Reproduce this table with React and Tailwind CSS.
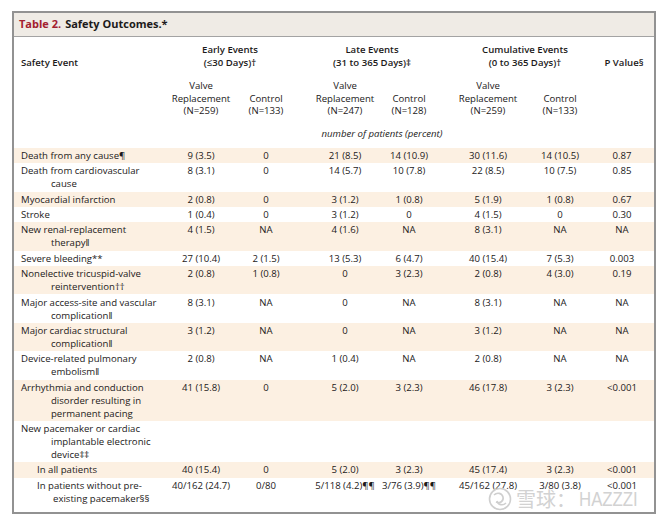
import React from "react";

const GRID = "grid grid-cols-[154px_66px_68px_78px_62px_82px_72px_58px]";
const ADJ = ["", "pr-[4px]", "pl-[8px]", "pr-[4px]", "pl-[10px]", "", "pr-[6px]"];

const rows = [
  { label: ["Death from any cause¶"], v: ["9 (3.5)", "0", "21 (8.5)", "14 (10.9)", "30 (11.6)", "14 (10.5)", "0.87"], s: true },
  { label: ["Death from cardiovascular", "cause"], v: ["8 (3.1)", "0", "14 (5.7)", "10 (7.8)", "22 (8.5)", "10 (7.5)", "0.85"] },
  { label: ["Myocardial infarction"], v: ["2 (0.8)", "0", "3 (1.2)", "1 (0.8)", "5 (1.9)", "1 (0.8)", "0.67"], s: true },
  { label: ["Stroke"], v: ["1 (0.4)", "0", "3 (1.2)", "0", "4 (1.5)", "0", "0.30"] },
  { label: ["New renal-replacement", "therapy‖"], v: ["4 (1.5)", "NA", "4 (1.6)", "NA", "8 (3.1)", "NA", "NA"], s: true },
  { label: ["Severe bleeding**"], v: ["27 (10.4)", "2 (1.5)", "13 (5.3)", "6 (4.7)", "40 (15.4)", "7 (5.3)", "0.003"] },
  { label: ["Nonelective tricuspid-valve", "reintervention††"], v: ["2 (0.8)", "1 (0.8)", "0", "3 (2.3)", "2 (0.8)", "4 (3.0)", "0.19"], s: true },
  { label: ["Major access-site and vascular", "complication‖"], v: ["8 (3.1)", "NA", "0", "NA", "8 (3.1)", "NA", "NA"] },
  { label: ["Major cardiac structural", "complication‖"], v: ["3 (1.2)", "NA", "0", "NA", "3 (1.2)", "NA", "NA"], s: true },
  { label: ["Device-related pulmonary", "embolism‖"], v: ["2 (0.8)", "NA", "1 (0.4)", "NA", "2 (0.8)", "NA", "NA"] },
  { label: ["Arrhythmia and conduction", "disorder resulting in", "permanent pacing"], v: ["41 (15.8)", "0", "5 (2.0)", "3 (2.3)", "46 (17.8)", "3 (2.3)", "<0.001"], s: true },
  { label: ["New pacemaker or cardiac", "implantable electronic", "device‡‡"], v: ["", "", "", "", "", "", ""] },
  { label: ["In all patients"], v: ["40 (15.4)", "0", "5 (2.0)", "3 (2.3)", "45 (17.4)", "3 (2.3)", "<0.001"], s: true, sub: true },
  { label: ["In patients without pre-", "existing pacemaker§§"], v: ["40/162 (24.7)", "0/80", "5/118 (4.2)¶¶", "3/76 (3.9)¶¶", "45/162 (27.8)", "3/80 (3.8)", "<0.001"], sub: true },
];

function Label({ lines, sub }) {
  return (
    <div className={sub ? "pl-[39px] [text-indent:-16px]" : "pl-[37px] [text-indent:-30px]"}>
      {lines.map((l, i) => (
        <React.Fragment key={i}>
          {i > 0 && <br />}
          {l}
        </React.Fragment>
      ))}
    </div>
  );
}

function SubHead({ a, b, c, adj }) {
  return (
    <div className={`text-center whitespace-nowrap ${adj}`}>
      {a}
      <br />
      {b}
      <br />
      {c}
    </div>
  );
}

function Logo() {
  return (
    <svg width="26" height="24" viewBox="0 0 26 24" fill="none" stroke="#cfcfcf" strokeWidth="1.6">
      <circle cx="13" cy="12" r="10.5" />
      <path d="M7 8c3-3 8-2 9 2s-3 7-7 5" />
      <path d="M19 16c-3 3-8 2-9-2" />
    </svg>
  );
}

export default function App() {
  return (
    <div className="relative w-[660px] h-[520px] bg-white pt-[11px] pl-[12px] font-['Open_Sans',sans-serif] text-[#1c1a1a]">
      <div className="w-[644px] h-[503px] border-2 border-[#929292] flex flex-col">
        <div className="h-[24px] bg-[#efebe5] border-b border-[#a3a3a3] flex items-center pl-[5px] text-[11px] font-bold">
          <span className="text-[#a3202f]">Table 2.</span>
          <span className="ml-[4px]">Safety Outcomes.*</span>
        </div>

        <div className="text-[9.6px] leading-[13px]">
          <div className={`${GRID} pt-[6px] font-semibold`}>
            <div className="pl-[7px] self-end">Safety Event</div>
            <div className="col-span-2 text-center pr-[10px]">
              Early Events
              <br />
              (≤30 Days)†
            </div>
            <div className="col-span-2 text-center">
              Late Events
              <br />
              (31 to 365 Days)‡
            </div>
            <div className="col-span-2 text-center pl-[12px]">
              Cumulative Events
              <br />
              (0 to 365 Days)†
            </div>
            <div className="self-end text-center pr-[2px]">P Value§</div>
          </div>

          <div className={`${GRID} mt-[11px] leading-[12.6px]`}>
            <div />
            <SubHead a="Valve" b="Replacement" c="(N=259)" adj={ADJ[0]} />
            <SubHead a="" b="Control" c="(N=133)" adj={ADJ[1]} />
            <SubHead a="Valve" b="Replacement" c="(N=247)" adj={ADJ[2]} />
            <SubHead a="" b="Control" c="(N=128)" adj={ADJ[3]} />
            <SubHead a="Valve" b="Replacement" c="(N=259)" adj={ADJ[4]} />
            <SubHead a="" b="Control" c="(N=133)" adj={ADJ[5]} />
            <div />
          </div>

          <div className={`${GRID} mt-[9px]`}>
            <div />
            <div className="col-span-6 text-center italic">number of patients (percent)</div>
          </div>

          <div className="mt-[8px]">
            {rows.map((r, i) => (
              <div key={i} className={`${GRID} py-[1.2px] ${r.s ? "bg-[#fcf0e2]" : ""}`}>
                <Label lines={r.label} sub={r.sub} />
                {r.v.map((val, j) => (
                  <div key={j} className={`text-center whitespace-nowrap ${ADJ[j]}`}>
                    {val}
                  </div>
                ))}
              </div>
            ))}
          </div>
        </div>
      </div>

      <div className="absolute left-[487px] top-[487px] flex items-center gap-[3px] text-[#d2d2d2] pointer-events-none">
        <Logo />
        <span className="text-[20px] leading-[24px] font-['Noto_Sans_CJK_SC',sans-serif]">雪球：</span>
        <span className="text-[20px] leading-[24px] font-['Liberation_Sans',sans-serif] scale-x-[0.84] origin-left inline-block">HAZZZI</span>
      </div>
    </div>
  );
}
